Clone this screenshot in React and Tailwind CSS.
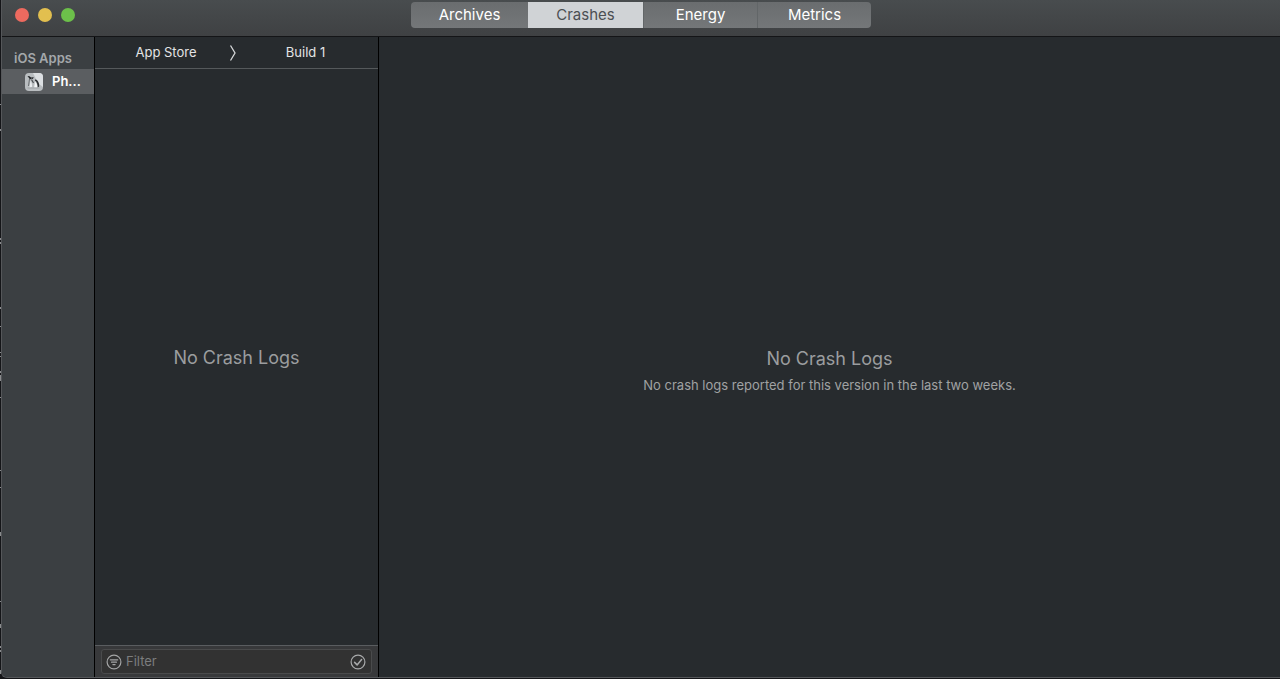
import React, { useState } from 'react';

const TABS = ['Archives', 'Crashes', 'Energy', 'Metrics'];

// slivers of the editor window behind this one: [y, height]
const SLIVERS = [[104, 1], [129, 2], [238, 2], [242, 2], [307, 2], [326, 1], [352, 1], [356, 1], [371, 2], [375, 6], [397, 1], [470, 1], [487, 1], [532, 4], [601, 1], [624, 4], [646, 2], [650, 2], [670, 4]];

const AppIcon = () => (
  <svg viewBox="0 0 20 20" className="h-5 w-5 shrink-0" aria-hidden="true">
    <rect x="1" y="1" width="18" height="18" rx="4" fill="#b9bdc0" />
    <path d="M9 1h6a4 4 0 0 1 4 4v10l-4-3-3-5z" fill="#dcdfe2" />
    <path d="M3.5 4l2 .3 1.5 1.300 2.800-.3-1 1.700-1.300-.4-1.500.9-1-1.500z" fill="#1f2225" />
    <path d="M5.5 7L4.500 14" stroke="#686c6f" strokeWidth="1" />
    <path d="M6.5 8.500c1 1.500 1.700 3.500 1.500 6.500l-2.500.5z" fill="#e8ebed" />
    <path d="M7.500 7.500l2 3.500" stroke="#4a4e51" strokeWidth="1.2" />
    <path d="M11.500 7.200c2.300.8 4 3.800 3.700 7.300l-1.500 1c0-3.200-.8-5.800-2.900-6.900z" fill="#2b2e31" />
    <path d="M11 9.500c1.700 1.500 2.400 4 2.200 6h-3z" fill="#f5f7f8" />
    <path d="M3.500 16h12" stroke="#989c9f" strokeWidth="0.8" />
  </svg>
);

const FilterIcon = () => (
  <svg viewBox="0 0 16 16" className="h-4 w-4 shrink-0" fill="none" stroke="#a3a4a5" strokeWidth="1.2" strokeLinecap="round" aria-hidden="true">
    <circle cx="8" cy="8" r="6.9" />
    <path d="M4.3 5.800h7.400M5.500 8.200h5M6.900 10.600h2.200" />
  </svg>
);

const CheckIcon = () => (
  <svg viewBox="0 0 16 16" className="h-4 w-4" fill="none" stroke="#a9aaab" strokeWidth="1.2" strokeLinecap="round" strokeLinejoin="round" aria-hidden="true">
    <circle cx="8" cy="8" r="6.9" />
    <path d="M4.600 8.400l2.500 2.500 4.500-5.300" strokeWidth="1.5" />
  </svg>
);

const TitleBar = ({ active, onChange }) => (
  <header className="grid h-[37px] shrink-0 grid-cols-[1fr_auto_1fr] items-start border-b border-[#141517] bg-linear-to-b from-[#484c4e] to-[#3f4143]">
    <div className="flex gap-[9px] pt-2 pl-[13px]">
      <button aria-label="Close" className="h-3.5 w-3.5 rounded-full bg-[#ed6a5f]" />
      <button aria-label="Minimize" className="h-3.5 w-3.5 rounded-full bg-[#e2bf4f]" />
      <button aria-label="Zoom" className="h-3.5 w-3.5 rounded-full bg-[#6cc04a]" />
    </div>
    <nav className="mt-0.5 flex overflow-hidden rounded">
      {TABS.map((tab) => (
        <button
          key={tab}
          onClick={() => onChange(tab)}
          aria-pressed={tab === active}
          className={
            tab === active
              ? 'h-[26px] w-[115px] bg-[#d0d3d6] text-[15px] leading-[26px] text-[#4c4f53]'
              : 'h-[26px] w-[114px] border-l border-[#626668] bg-linear-to-b from-[#6a6d6f] to-[#747779] text-[15px] leading-[26px] text-white first:w-[117px] first:border-l-0'
          }
        >
          {tab}
        </button>
      ))}
    </nav>
  </header>
);

const Sidebar = () => (
  <aside className="w-[92px] shrink-0 bg-[#3b3f42] pt-[11px]">
    <h2 className="pl-3 text-[13px] leading-[21px] font-semibold text-[#a4a8ab]">iOS Apps</h2>
    <button className="flex h-[25px] w-full items-center gap-2 bg-[#5b5e61] pl-[22px] text-[13px] font-semibold text-white">
      <AppIcon />
      Ph...
    </button>
  </aside>
);

const LogList = () => {
  const [filter, setFilter] = useState('');

  return (
    <section className="flex w-[285px] shrink-0 flex-col border-x border-black">
      <div className="flex h-8 shrink-0 items-center border-b border-[#55595b] text-[13px] text-[#e3e4e5]">
        <button className="w-[134px] pl-2">App Store</button>
        <svg viewBox="0 0 8 18" className="h-[18px] w-2 shrink-0" fill="none" stroke="#d5d7d8" strokeWidth="1.3" aria-hidden="true">
          <path d="M1.5 1.5l4.500 7.500-4.500 7.500" />
        </svg>
        <button className="flex-1 pr-1">Build 1</button>
      </div>
      <div className="flex flex-1 items-center justify-center pt-0.5">
        <p className="text-lg leading-6 text-[#9b9d9f]">No Crash Logs</p>
      </div>
      <div className="shrink-0 border-t border-[#5a5d60] bg-[#38393b] px-1.5 pt-[3px] pb-[3px]">
        <div className="flex h-[25px] items-center gap-1 rounded-[3px] border border-[#4a4b4c] bg-[#323232] pr-[5px] pl-1">
          <FilterIcon />
          <input
            type="text"
            aria-label="Filter"
            placeholder="Filter"
            value={filter}
            onChange={(e) => setFilter(e.target.value)}
            className="min-w-0 flex-1 bg-transparent text-[13px] text-[#dcdcdc] outline-none placeholder:text-[#7c7d7e]"
          />
          <button aria-label="Hide resolved">
            <CheckIcon />
          </button>
        </div>
      </div>
    </section>
  );
};

const App = () => {
  const [active, setActive] = useState('Crashes');

  return (
    <div className="relative h-screen bg-[#141518] pb-px pl-px font-['Inter','Liberation_Sans',sans-serif]">
      <svg className="absolute top-0 left-0 h-full w-px" fill="#8a8c8e" aria-hidden="true">
        {SLIVERS.map(([y, height]) => (
          <rect key={y} x="0" y={y} width="1" height={height} />
        ))}
      </svg>
      <div className="flex h-full flex-col overflow-hidden rounded-bl-md border-b border-l border-[#55575a] bg-[#272b2e]">
        <TitleBar active={active} onChange={setActive} />
        <div className="flex min-h-0 flex-1">
          <Sidebar />
          <LogList />
          <main className="flex flex-1 flex-col items-center justify-center gap-1 pt-[27px] text-[#9b9d9f]">
            <h1 className="text-lg leading-6">No Crash Logs</h1>
            <p className="text-[13px] leading-5 text-[#a0a2a3]">No crash logs reported for this version in the last two weeks.</p>
          </main>
        </div>
      </div>
    </div>
  );
};

export default App;
